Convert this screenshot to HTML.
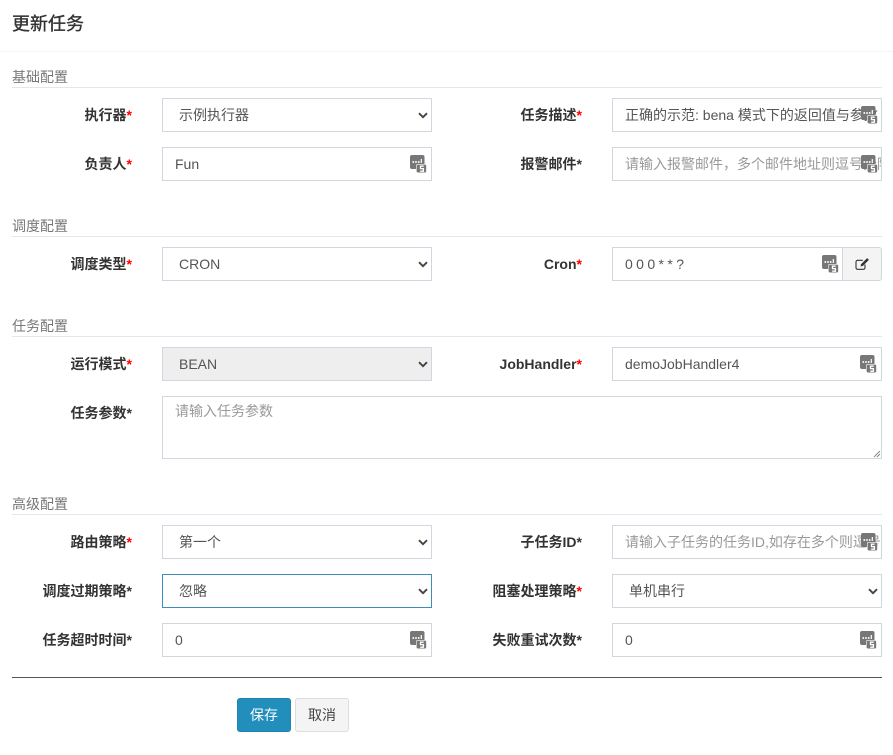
<!DOCTYPE html>
<html lang="zh"><head><meta charset="utf-8"><title>更新任务</title>
<style>
*{box-sizing:border-box}
html,body{margin:0;padding:0;background:#fff}
body{width:893px;height:755px;position:relative;overflow:hidden;font:14px/20px "Liberation Sans","Noto Sans CJK SC",sans-serif;color:#333}
.a{position:absolute}
.title{left:12px;top:12px;font-size:18px;line-height:24px;color:#333;-webkit-text-stroke:.35px #333}
.sec{left:12px;font-size:14px;line-height:20px;color:#777;white-space:nowrap}
.ln{left:12px;width:870px;height:1px;background:#e3e6ea}
.lb{width:120px;text-align:right;font-weight:bold;line-height:20px;white-space:nowrap;color:#333}
.lb i{font-style:normal;color:#f00}
.c{width:270px;height:34px;border:1px solid #d2d6de;background:#fff;line-height:32px;padding-left:12px;color:#555;white-space:nowrap;overflow:hidden}
.s{padding-left:16px}
.ph{color:#999}
.s svg{position:absolute;right:3px;top:13px}
.ic{position:absolute;width:17px;height:18px}
.b{top:698px;height:34px;border-radius:3px;text-align:center;line-height:32px;border:1px solid}
</style></head><body>
<svg width="0" height="0" style="position:absolute"><defs>
<symbol id="lp" viewBox="0 0 17 18"><rect x="0" y="0" width="14.500" height="14" rx="2" fill="#777"/><path d="M2.500 7h1.600M5.200 7h1.600M7.900 7h1.600" stroke="#fff" stroke-width="1.700"/><path d="M11.300 8V4" stroke="#fff" stroke-width="1.200"/><rect x="6.300" y="9.300" width="10.200" height="8.500" rx="1.500" fill="#777" stroke="#fff" stroke-width=".6"/><path d="M13.700 11.200h-3.200v2.400h2.900v2.600h-3.200" fill="none" stroke="#fff" stroke-width="1.300"/></symbol>
<symbol id="ch" viewBox="0 0 10 7"><path d="M1 1.200l4 4 4-4" fill="none" stroke="#444" stroke-width="1.900"/></symbol>
</defs></svg>

<div class="a title">更新任务</div>
<div class="a" style="left:0;top:51px;width:893px;height:1px;background:#f4f4f4"></div>

<div class="a sec" style="top:67px">基础配置</div><div class="a ln" style="top:87px"></div>
<div class="a sec" style="top:216px">调度配置</div><div class="a ln" style="top:236px"></div>
<div class="a sec" style="top:316px">任务配置</div><div class="a ln" style="top:336px"></div>
<div class="a sec" style="top:494px">高级配置</div><div class="a ln" style="top:514px"></div>

<div class="a lb" style="left:12px;top:105px">执行器<i>*</i></div>
<div class="a c s" style="left:162px;top:98px">示例执行器<svg width="10" height="7"><use href="#ch"/></svg></div>
<div class="a lb" style="left:462px;top:105px">任务描述<i>*</i></div>
<div class="a c" style="left:612px;top:98px">正确的示范: bena 模式下的返回值与参数</div>
<svg class="ic" style="left:861px;top:106px"><use href="#lp"/></svg>

<div class="a lb" style="left:12px;top:154px">负责人<i>*</i></div>
<div class="a c" style="left:162px;top:147px">Fun</div>
<svg class="ic" style="left:410px;top:155px"><use href="#lp"/></svg>
<div class="a lb" style="left:462px;top:154px">报警邮件*</div>
<div class="a c ph" style="left:612px;top:147px">请输入报警邮件，多个邮件地址则逗号分隔</div>
<svg class="ic" style="left:861px;top:155px"><use href="#lp"/></svg>

<div class="a lb" style="left:12px;top:254px">调度类型<i>*</i></div>
<div class="a c s" style="left:162px;top:247px">CRON<svg width="10" height="7"><use href="#ch"/></svg></div>
<div class="a lb" style="left:462px;top:254px">Cron<i>*</i></div>
<div class="a c" style="left:612px;top:247px;width:231px;word-spacing:-.5px">0 0 0 * * ?</div>
<div class="a" style="left:842px;top:247px;width:40px;height:34px;background:#f4f4f4;border:1px solid #d2d6de;border-radius:0 3px 3px 0"></div>
<svg class="a" style="left:855px;top:257px" width="15" height="14" viewBox="0 0 15 14"><path d="M10 7.500v3.200a1.600 1.600 0 0 1-1.600 1.600H2.600A1.600 1.600 0 0 1 1 10.700V4.900a1.600 1.600 0 0 1 1.600-1.600h5.200" fill="none" stroke="#333" stroke-width="1.100"/><path d="M5.500 9.500l.6-2.400 6-6 1.800 1.800-6 6z" fill="#333"/></svg>
<svg class="ic" style="left:822px;top:255px"><use href="#lp"/></svg>

<div class="a lb" style="left:12px;top:354px">运行模式<i>*</i></div>
<div class="a c s" style="left:162px;top:347px;background:#eee">BEAN<svg width="10" height="7"><use href="#ch"/></svg></div>
<div class="a lb" style="left:462px;top:354px">JobHandler<i>*</i></div>
<div class="a c" style="left:612px;top:347px">demoJobHandler4</div>
<svg class="ic" style="left:860px;top:355px"><use href="#lp"/></svg>

<div class="a lb" style="left:12px;top:403px">任务参数*</div>
<div class="a c ph" style="left:162px;top:396px;width:720px;height:63px;line-height:20px;padding:4px 12px">请输入任务参数</div>
<svg class="a" style="left:871px;top:448px" width="10" height="10"><path d="M9 3L3 9M9 6L6 9" stroke="#888" stroke-width="1"/></svg>

<div class="a lb" style="left:12px;top:532px">路由策略<i>*</i></div>
<div class="a c s" style="left:162px;top:525px">第一个<svg width="10" height="7"><use href="#ch"/></svg></div>
<div class="a lb" style="left:462px;top:532px">子任务ID*</div>
<div class="a c ph" style="left:612px;top:525px">请输入子任务的任务ID,如存在多个则逗号分隔</div>
<svg class="ic" style="left:861px;top:533px"><use href="#lp"/></svg>

<div class="a lb" style="left:12px;top:581px">调度过期策略*</div>
<div class="a c s" style="left:162px;top:574px;border-color:#3c8dbc;">忽略<svg width="10" height="7"><use href="#ch"/></svg></div>
<div class="a lb" style="left:462px;top:581px">阻塞处理策略<i>*</i></div>
<div class="a c s" style="left:612px;top:574px">单机串行<svg width="10" height="7"><use href="#ch"/></svg></div>

<div class="a lb" style="left:12px;top:630px">任务超时时间*</div>
<div class="a c" style="left:162px;top:623px">0</div>
<svg class="ic" style="left:410px;top:631px"><use href="#lp"/></svg>
<div class="a lb" style="left:462px;top:630px">失败重试次数*</div>
<div class="a c" style="left:612px;top:623px">0</div>
<svg class="ic" style="left:860px;top:631px"><use href="#lp"/></svg>

<div class="a" style="left:12px;top:677px;width:870px;height:1px;background:#555"></div>
<div class="a b" style="left:237px;width:54px;background:#218ebc;border-color:#1f85b0;color:#fff">保存</div>
<div class="a b" style="left:295px;width:54px;background:#f4f4f4;border-color:#ddd;color:#444">取消</div>
</body></html>
